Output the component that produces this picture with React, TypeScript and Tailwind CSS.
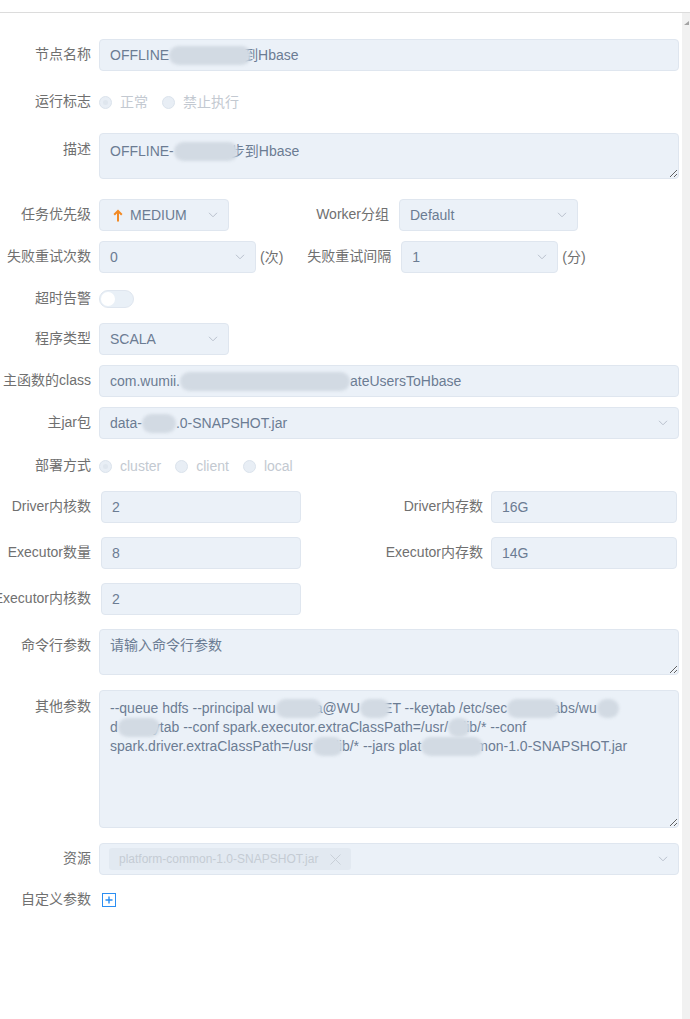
import type { ReactNode } from 'react';

const FONT = 'font-["Liberation_Sans","Noto_Sans_CJK_SC",sans-serif]';

function Blob({ w, overlap }: { w: string; overlap?: boolean }) {
  return (
    <span
      className={`relative z-10 inline-block h-[19px] rounded-full bg-[#d2dae3] align-middle blur-[1.5px] ${w} ${overlap ? '-mr-[7px]' : ''}`}
    />
  );
}

function Chevron() {
  return (
    <svg width="10" height="6" viewBox="0 0 10 6" className="shrink-0">
      <path d="M1 0.8l4 4 4-4" fill="none" stroke="#b8c0cc" strokeWidth="1" />
    </svg>
  );
}

function Label({ children, w = 'w-[91px]', top }: { children: ReactNode; w?: string; top?: boolean }) {
  return (
    <div
      className={`flex shrink-0 justify-end whitespace-nowrap text-[14px] leading-[15.5px] text-[#707070] ${w} ${top ? 'pt-[9px]' : 'items-center'}`}
    >
      {children}
    </div>
  );
}

function Field({ w, children, select }: { w: string; children?: ReactNode; select?: boolean }) {
  return (
    <div
      className={`flex h-8 shrink-0 items-center justify-between whitespace-nowrap rounded-[4px] border border-[#dfe6ef] bg-[#ebf1f8] pl-[10px] pr-[10px] text-[14px] text-[#6b7c93] ${w}`}
    >
      <div className="flex items-center">{children}</div>
      {select && <Chevron />}
    </div>
  );
}

function Area({ h, children }: { h: string; children?: ReactNode }) {
  return (
    <div
      className={`flex-1 resize-y overflow-auto rounded-[4px] border border-[#dfe6ef] bg-[#ebf1f8] px-[10px] pt-[8px] text-[14px] leading-[15.5px] text-[#6b7c93] ${h}`}
    >
      {children}
    </div>
  );
}

function Radio({ label, checked }: { label: string; checked?: boolean }) {
  return (
    <div className="mr-[14px] flex items-center">
      <span className="flex h-[13px] w-[13px] items-center justify-center rounded-full border border-[#dbe3ec] bg-[#e8eef5]">
        {checked && <span className="h-[5px] w-[5px] rounded-full bg-[#dfe6ee]" />}
      </span>
      <span className="ml-[8px] text-[14px] text-[#c3c9d1]">{label}</span>
    </div>
  );
}

export default function App() {
  return (
    <div className={`h-[1019px] overflow-hidden bg-white ${FONT}`}>
      <div className="h-[13px] border-b border-[#dcdcdc]" />
      <div className="flex h-[1006px]">
        <div className="flex-1 pr-[3px] pt-[26px]">
          {/* 节点名称 */}
          <div className="flex">
            <Label>节点名称</Label>
            <div className="ml-2 flex-1">
              <Field w="w-full">
                OFFLINE
                <Blob w="w-[82px]" overlap />
                到Hbase
              </Field>
            </div>
          </div>

          {/* 运行标志 */}
          <div className="mt-[15px] flex h-8">
            <Label>运行标志</Label>
            <div className="ml-2 flex items-center">
              <Radio label="正常" checked />
              <Radio label="禁止执行" />
            </div>
          </div>

          {/* 描述 */}
          <div className="mt-[15px] flex">
            <Label top>描述</Label>
            <div className="ml-2 flex flex-1">
              <Area h="h-[46px]">
                <div className="flex items-center whitespace-nowrap">
                  OFFLINE-
                  <Blob w="w-[64px]" overlap />
                  步到Hbase
                </div>
              </Area>
            </div>
          </div>

          {/* 任务优先级 / Worker分组 */}
          <div className="mt-[20px] flex">
            <Label>任务优先级</Label>
            <div className="ml-2">
              <Field w="w-[130px]" select>
                <svg width="10" height="13" viewBox="0 0 10 13" className="ml-[3px] mr-[7px]">
                  <path d="M5 12.5V2M1.2 5.8L5 2l3.8 3.8" fill="none" stroke="#f28a25" strokeWidth="2" />
                </svg>
                MEDIUM
              </Field>
            </div>
            <Label w="w-[160px]">Worker分组</Label>
            <div className="ml-[10px]">
              <Field w="w-[179px]" select>
                Default
              </Field>
            </div>
          </div>

          {/* 失败重试 */}
          <div className="mt-[10px] flex">
            <Label>失败重试次数</Label>
            <div className="ml-2">
              <Field w="w-[157px]" select>
                0
              </Field>
            </div>
            <div className="ml-[4px] flex items-center text-[14px] text-[#707070]">(次)</div>
            <Label w="w-[108px]">失败重试间隔</Label>
            <div className="ml-[10px]">
              <Field w="w-[157px]" select>
                1
              </Field>
            </div>
            <div className="ml-[4px] flex items-center text-[14px] text-[#707070]">(分)</div>
          </div>

          {/* 超时告警 */}
          <div className="mt-[10px] flex h-8">
            <Label>超时告警</Label>
            <div className="ml-2 flex items-center">
              <div className="flex h-[18px] w-[35px] items-center rounded-full border border-[#dfe6ef] bg-[#e9f0f7] px-[1px]">
                <span className="h-[14px] w-[14px] rounded-full bg-white" />
              </div>
            </div>
          </div>

          {/* 程序类型 */}
          <div className="mt-[8px] flex">
            <Label>程序类型</Label>
            <div className="ml-2">
              <Field w="w-[130px]" select>
                SCALA
              </Field>
            </div>
          </div>

          {/* 主函数的class */}
          <div className="mt-[10px] flex">
            <Label>主函数的class</Label>
            <div className="ml-2 flex-1">
              <Field w="w-full">
                com.wumii.
                <Blob w="w-[170px]" />
                ateUsersToHbase
              </Field>
            </div>
          </div>

          {/* 主jar包 */}
          <div className="mt-[10px] flex">
            <Label>主jar包</Label>
            <div className="ml-2 flex-1">
              <Field w="w-full" select>
                data-
                <Blob w="w-[34px]" />
                .0-SNAPSHOT.jar
              </Field>
            </div>
          </div>

          {/* 部署方式 */}
          <div className="mt-[11px] flex h-8">
            <Label>部署方式</Label>
            <div className="ml-2 flex items-center">
              <Radio label="cluster" checked />
              <Radio label="client" />
              <Radio label="local" />
            </div>
          </div>

          {/* Driver */}
          <div className="mt-[9px] flex">
            <Label>Driver内核数</Label>
            <div className="ml-[10px]">
              <Field w="w-[200px]">2</Field>
            </div>
            <Label w="w-[182px]">Driver内存数</Label>
            <div className="ml-2">
              <Field w="w-[186px]">16G</Field>
            </div>
          </div>

          <div className="mt-[14px] flex">
            <Label>Executor数量</Label>
            <div className="ml-[10px]">
              <Field w="w-[200px]">8</Field>
            </div>
            <Label w="w-[182px]">Executor内存数</Label>
            <div className="ml-2">
              <Field w="w-[186px]">14G</Field>
            </div>
          </div>

          <div className="mt-[14px] flex">
            <Label>Executor内核数</Label>
            <div className="ml-[10px]">
              <Field w="w-[200px]">2</Field>
            </div>
          </div>

          {/* 命令行参数 */}
          <div className="mt-[14px] flex">
            <Label top>命令行参数</Label>
            <div className="ml-2 flex flex-1">
              <Area h="h-[46px]">请输入命令行参数</Area>
            </div>
          </div>

          {/* 其他参数 */}
          <div className="mt-[15px] flex">
            <Label top>其他参数</Label>
            <div className="ml-2 flex flex-1">
              <Area h="h-[138px]">
                <div className="whitespace-nowrap">
                  <div className="flex items-center">
                    --queue hdfs --principal wu
                    <Blob w="w-[46px]" overlap />
                    a@WU
                    <Blob w="w-[30px]" overlap />
                    ET --keytab /etc/sec
                    <Blob w="w-[52px]" overlap />
                    abs/wu
                    <Blob w="w-[22px]" />
                  </div>
                  <div className="flex items-center">
                    d
                    <Blob w="w-[42px]" overlap />
                    ytab --conf spark.executor.extraClassPath=/usr/
                    <Blob w="w-[22px]" overlap />
                    lib/* --conf
                  </div>
                  <div className="flex items-center">
                    spark.driver.extraClassPath=/usr
                    <Blob w="w-[30px]" overlap />
                    lib/* --jars plat
                    <Blob w="w-[62px]" overlap />
                    mon-1.0-SNAPSHOT.jar
                  </div>
                </div>
              </Area>
            </div>
          </div>

          {/* 资源 */}
          <div className="mt-[15px] flex">
            <Label>资源</Label>
            <div className="ml-2 flex-1">
              <div className="flex h-8 items-center justify-between rounded-[4px] border border-[#dfe6ef] bg-[#ebf1f8] pl-[9px] pr-[10px]">
                <div className="flex h-[22px] shrink-0 items-center whitespace-nowrap rounded-[3px] bg-[#e2e9f1] pl-[10px] pr-[10px] text-[12px] text-[#c5ccd4]">
                  platform-common-1.0-SNAPSHOT.jar
                  <svg width="11" height="11" viewBox="0 0 11 11" className="ml-[12px]">
                    <path d="M0.5 0.5l10 10M10.5 0.5l-10 10" stroke="#c9d0d8" strokeWidth="1" />
                  </svg>
                </div>
                <Chevron />
              </div>
            </div>
          </div>

          {/* 自定义参数 */}
          <div className="mt-[9px] flex h-8">
            <Label>自定义参数</Label>
            <div className="ml-[11px] flex items-center">
              <svg width="14" height="14" viewBox="0 0 14 14">
                <rect x="0.5" y="0.5" width="13" height="13" fill="#fff" stroke="#2b8ef2" strokeWidth="1" />
                <path d="M7 3.5v7M3.5 7h7" stroke="#2b8ef2" strokeWidth="1.4" />
              </svg>
            </div>
          </div>
        </div>

        {/* scrollbar track */}
        <div className="relative w-[8px] shrink-0 bg-[#f1f1f1]">
          <svg width="5" height="4" viewBox="0 0 5 4" className="absolute left-[2px] top-[8px]">
            <path d="M0 4L5 4L5 0Z" fill="#a3a3a3" />
          </svg>
        </div>
      </div>
    </div>
  );
}
